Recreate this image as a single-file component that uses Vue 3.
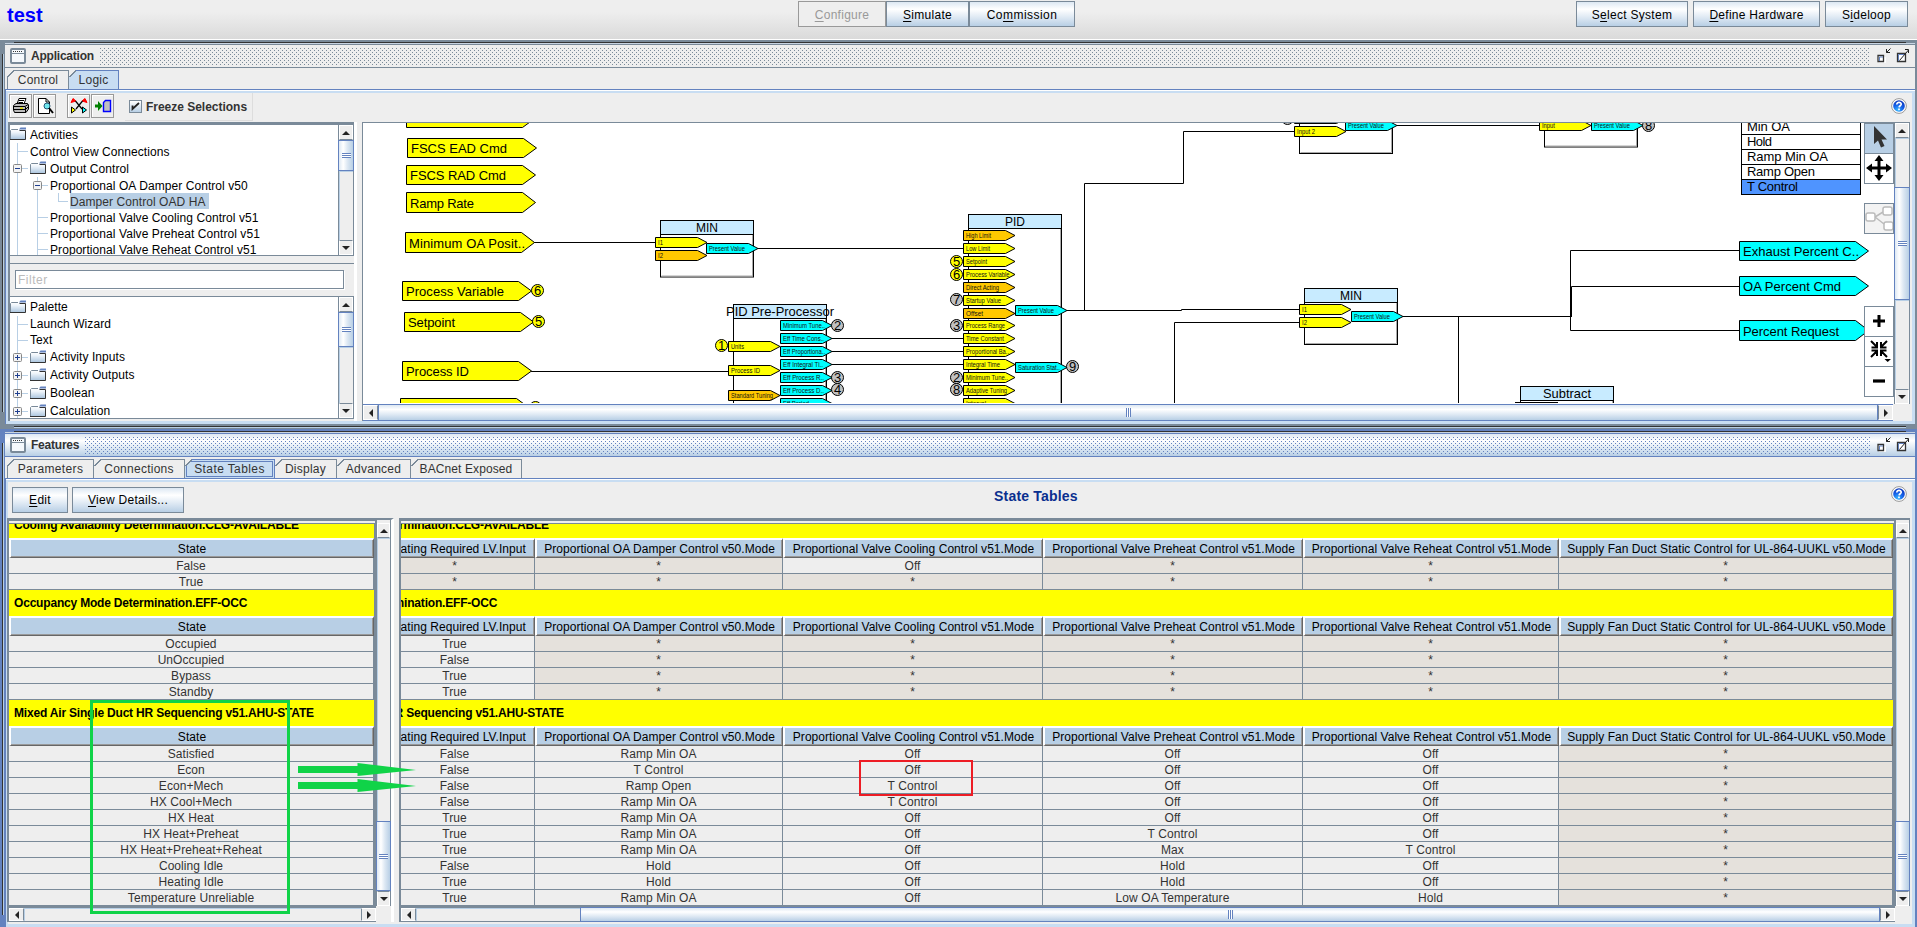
<script setup>
const activities = [
  { t: 'Activities', d: 0, folder: true },
  { t: 'Control View Connections', d: 1 },
  { t: 'Output Control', d: 1, folder: true, box: '-' },
  { t: 'Proportional OA Damper Control v50', d: 2, box: '-', rails: 1 },
  { t: 'Damper Control OAD HA', d: 3, sel: true, rails: 2, end: true },
  { t: 'Proportional Valve Cooling Control v51', d: 2, rails: 1 },
  { t: 'Proportional Valve Preheat Control v51', d: 2, rails: 1 },
  { t: 'Proportional Valve Reheat Control v51', d: 2, rails: 1 },
]
const palette = [
  { t: 'Palette', d: 0, folder: true },
  { t: 'Launch Wizard', d: 1 },
  { t: 'Text', d: 1 },
  { t: 'Activity Inputs', d: 1, folder: true, box: '+' },
  { t: 'Activity Outputs', d: 1, folder: true, box: '+' },
  { t: 'Boolean', d: 1, folder: true, box: '+' },
  { t: 'Calculation', d: 1, folder: true, box: '+' },
]
const trees = { activities, palette }

const Y = '#ffff00', C = '#00ffff', O = '#ffc800', G = '#c0c0c0'
// x, top, height, label, label width, fill
const tags = [
  [406.5, 108.5, 19, '', 0, Y],
  [407.5, 138.5, 19, 'FSCS EAD Cmd', 96, Y],
  [406.5, 165.5, 19, 'FSCS RAD Cmd', 96, Y],
  [406.5, 192.5, 20, 'Ramp Rate', 64, Y],
  [405.5, 232.5, 20, 'Minimum OA Posit..', 116, Y],
  [402.5, 281.5, 19, 'Process Variable', 98, Y],
  [404.5, 312.5, 19, 'Setpoint', 47, Y],
  [402.5, 361.5, 19, 'Process ID', 63, Y],
  [400.5, 398.5, 19, 'Process Units', 79, Y],
  [1739.5, 241.5, 19, 'Exhaust Percent C..', 116, C],
  [1739.5, 276.5, 19, 'OA Percent Cmd', 98, C],
  [1739.5, 320.5, 20, 'Percent Request', 96, C],
]
// x, top, bottom, title, title width
const blocks = [
  [660.5, 220.5, 277, 'MIN', 22],
  [733.5, 304.5, 420, 'PID Pre-Processor', 108],
  [968.5, 214.5, 420, 'PID', 20],
  [1299.5, 80.5, 153.5, '', 0],
  [1544.5, 80.5, 147, '', 0],
  [1304.5, 288.5, 344.5, 'MIN', 22],
  [1520.5, 386.5, 420, 'Subtract', 48],
]
// x, centre y, label, label width, fill
const ports = [
  [655.5, 242.5, 'I1', 5, Y], [655.5, 255.5, 'I2', 5, O], [706.5, 248.5, 'Present Value', 36, C],
  [728.5, 346.5, 'Units', 13, Y], [728.5, 370.5, 'Process ID', 29, Y], [728.5, 395.5, 'Standard Tuning', 42, O],
  [780.5, 325.5, 'Minimum Tune..', 42, C], [780.5, 338.5, 'Eff Time Cons..', 41, C],
  [780.5, 351.5, 'Eff Proportiona..', 42, C], [780.5, 364.5, 'Eff Integral Ti..', 40, C],
  [780.5, 377.5, 'Eff Process R..', 41, C], [780.5, 390.5, 'Eff Process D..', 41, C],
  [780.5, 403.5, 'Eff Period', 26, C],
  [963.5, 235.5, 'High Limit', 25, O], [963.5, 248.5, 'Low Limit', 24, Y],
  [963.5, 261.5, 'Setpoint', 21, Y], [963.5, 274.5, 'Process Variable', 43.5, Y],
  [963.5, 287.5, 'Direct Acting', 33, O], [963.5, 300.5, 'Startup Value', 35, Y],
  [963.5, 313.5, 'Offset', 17, O], [963.5, 325.5, 'Process Range', 39, Y],
  [963.5, 338.5, 'Time Constant', 38, Y], [963.5, 351.5, 'Proportional Ba..', 43, Y],
  [963.5, 364.5, 'Integral Time', 34, Y], [963.5, 377.5, 'Minimum Tune..', 42, Y],
  [963.5, 390.5, 'Adaptive Tuning', 41, Y], [963.5, 403.5, 'Interval', 20, Y],
  [1015.5, 310.5, 'Present Value', 36, C], [1015.5, 367.5, 'Saturation Stat..', 42, C],
  [1294.5, 118.5, '', 0, Y], [1294.5, 131.5, 'Input 2', 18, Y], [1345.5, 125.5, 'Present Value', 36, C],
  [1539.5, 125.5, 'Input', 13, Y], [1591.5, 125.5, 'Present Value', 36, C],
  [1299.5, 309.5, 'I1', 5, Y], [1299.5, 322.5, 'I2', 5, Y], [1351.5, 316.5, 'Present Value', 36, C],
]
const dots = [
  [537.5, 290.5, 6, Y], [538.5, 321.5, 5, Y], [721.5, 345.5, 1, Y], [535.5, 407.5, 1, Y],
  [837.5, 325.5, 2, G], [837.5, 377.5, 3, G], [837.5, 389.5, 4, G],
  [956.5, 261.5, 5, Y], [956.5, 274.5, 6, Y], [956.5, 299.5, 7, G], [956.5, 325.5, 3, G],
  [956.5, 377.5, 2, G], [956.5, 389.5, 8, G], [1072.5, 366.5, 9, G],
  [1287.5, 118.5, 7, G], [1648.5, 125.5, 8, G],
]
const wires = [
  'M534 242.5H655', 'M758 248.5H963', 'M531 371.5H728',
  'M832 338.5H963', 'M832 351.5H963', 'M832 364.5H963', 'M832 403.5H963',
  'M1067 310.5H1181.5V309.5H1299', 'M1084.5 310.5V183.5H1183.5V131.5H1294',
  'M1397 125.5H1539', 'M1299 322.5H1174.5V405', 'M1403 316.5H1570.5', 'M1458.5 316.5V405',
  'M1739 250.5H1570.5V330.5H1739', 'M1739 286.5H1571.5V317',
]
const states = [['Min OA', 119.5, 43], ['Hold', 134.5, 25], ['Ramp Min OA', 149.5, 81], ['Ramp Open', 164.5, 68], ['T Control', 179.5, 51]]

const heads = ['', 'Heating Required LV.Input', 'Proportional OA Damper Control v50.Mode', 'Proportional Valve Cooling Control v51.Mode', 'Proportional Valve Preheat Control v51.Mode', 'Proportional Valve Reheat Control v51.Mode', 'Supply Fan Duct Static Control for UL-864-UUKL v50.Mode']
const T = 'T Control', R = 'Ramp Min OA'
const sections = [
  { title: 'Cooling Availability Determination.CLG-AVAILABLE', rows: [
    ['False', '*', '*', 'Off', '*', '*', '*'],
    ['True', '*', '*', '*', '*', '*', '*'],
  ] },
  { title: 'Occupancy Mode Determination.EFF-OCC', rows: [
    ['Occupied', 'True', '*', '*', '*', '*', '*'],
    ['UnOccupied', 'False', '*', '*', '*', '*', '*'],
    ['Bypass', 'True', '*', '*', '*', '*', '*'],
    ['Standby', 'True', '*', '*', '*', '*', '*'],
  ] },
  { title: 'Mixed Air Single Duct HR Sequencing v51.AHU-STATE', rows: [
    ['Satisfied', 'False', R, 'Off', 'Off', 'Off', '*'],
    ['Econ', 'False', T, 'Off', 'Off', 'Off', '*'],
    ['Econ+Mech', 'False', 'Ramp Open', T, 'Off', 'Off', '*'],
    ['HX Cool+Mech', 'False', R, T, 'Off', 'Off', '*'],
    ['HX Heat', 'True', R, 'Off', 'Off', 'Off', '*'],
    ['HX Heat+Preheat', 'True', R, 'Off', T, 'Off', '*'],
    ['HX Heat+Preheat+Reheat', 'True', R, 'Off', 'Max', T, '*'],
    ['Cooling Idle', 'False', 'Hold', 'Off', 'Hold', 'Off', '*'],
    ['Heating Idle', 'True', 'Hold', 'Off', 'Hold', 'Off', '*'],
    ['Temperature Unreliable', 'True', R, 'Off', 'Low OA Temperature', 'Hold', '*'],
  ] },
]
const featureTabs = ['Parameters', 'Connections', 'State Tables', 'Display', 'Advanced', 'BACnet Exposed']
</script>

<template>
  <div class="root">
    <svg class="defs" width="0" height="0">
      <defs>
        <linearGradient id="fold" x1="0" y1="0" x2="0" y2="1"><stop offset="0" stop-color="#fff" /><stop offset=".3" stop-color="#eef4fa" /><stop offset="1" stop-color="#a9c4de" /></linearGradient>
        <radialGradient id="ball" cx=".4" cy=".85" r=".9"><stop offset="0" stop-color="#36b8ff" /><stop offset=".5" stop-color="#1560e8" /><stop offset="1" stop-color="#0a2fb4" /></radialGradient>
        <symbol id="folder" viewBox="0 0 16 14">
          <path d="M.5 12.500V3.500L1.500 2.500H8.500L10.500 3.500H15.500V12.500Z" fill="url(#fold)" />
          <path d="M.5 12.500V3.500L1.500 2.500H8" fill="none" stroke="#7a8a99" />
          <path d="M0 12.500H15.500V3.500H9.500" fill="none" stroke="#333" />
          <path d="M9 2.500L10.500 .5H16V2.500Z" fill="#6382bf" />
        </symbol>
        <symbol id="win" viewBox="0 0 16 16">
          <rect x="1" y="1" width="14" height="14" rx="1" fill="#f4f8fc" stroke="#7a8a99" stroke-width="2" />
          <path d="M2 5.5H14" stroke="#7a8a99" />
          <path d="M3 3.5H13" stroke="#333" stroke-dasharray="1 1" />
        </symbol>
        <symbol id="restore" viewBox="0 0 14 16">
          <path d="M2.5 9.5H8.500V14.500H2.500Z" fill="#fff" stroke="#fff" />
          <path d="M1 7.500H6.500V13.500H1Z" fill="#fff" stroke="#333" stroke-width="1.300" />
          <path d="M2.500 13V9H6" fill="none" stroke="#6382bf" />
          <path d="M13.500 .5L9.500 4.500M9.500 1V4.500H13" fill="none" stroke="#222" />
        </symbol>
        <symbol id="maxi" viewBox="0 0 14 16">
          <path d="M1.500 5.500H9.500V13.500H1.500Z" fill="#fff" stroke="#333" stroke-width="1.300" />
          <path d="M2.500 13V6.500H9" fill="none" stroke="#6382bf" />
          <path d="M3.500 12.500L12.500 2M9 1.500H12.500V5" fill="none" stroke="#222" />
        </symbol>
        <symbol id="help" viewBox="0 0 16 16">
          <circle cx="8" cy="8" r="7.4" fill="#fff" stroke="#999" />
          <circle cx="8" cy="8" r="5.8" fill="url(#ball)" />
          <path d="M5.8 6.4C5.8 3.6 10.3 3.8 10.2 6.3C10.1 7.8 8.2 7.8 8.1 9.4M8 10.6V12.2" fill="none" stroke="#fff" stroke-width="1.7" />
        </symbol>
      </defs>
    </svg>

    <header class="top">
      <h1>test</h1>
      <nav class="modes">
        <span class="btn off"><u>C</u>onfigure</span><span class="btn"><u>S</u>imulate</span><span class="btn">Co<u>m</u>mission</span>
      </nav>
      <nav class="right">
        <span class="btn">S<u>e</u>lect System</span><span class="btn"><u>D</u>efine Hardware</span><span class="btn">S<u>i</u>deloop</span>
      </nav>
    </header>

    <section class="frame app">
      <div class="edge"></div>
      <div class="title"><svg width="16" height="16"><use href="#win" /></svg><b>Application</b><span class="bumps"></span><svg class="w1" width="14" height="16"><use href="#restore" /></svg><svg class="w2" width="14" height="16"><use href="#maxi" /></svg></div>
      <div class="tabs"><span class="tab c1">Control</span><span class="tab c2 on">Logic</span></div>
      <div class="pane">
        <div class="tools">
          <span class="tb"><svg width="18" height="18" viewBox="0 0 18 18"><path d="M5 7L7 1.5H14L12 7M7 3.5H12M6.5 5.5H11" fill="#fff" stroke="#000" /><path d="M1.5 8.5L4 6.5H15.5L16.5 8V12L14 15.5H2.5L1.5 13Z" fill="#bbb" stroke="#000" /><path d="M2 9.5H13L16 7.5M2 12.5H13.5L16 10M13.5 10V15" fill="none" stroke="#000" /><path d="M8 11.2H11" stroke="#dd0" stroke-width="1.5" /></svg></span>
          <span class="tb"><svg width="18" height="18" viewBox="0 0 18 18"><path d="M2.5 1.5H10L13.5 5V16.5H2.5Z" fill="#fff" stroke="#000" /><path d="M10 1.5V5H13" fill="none" stroke="#000" /><circle cx="11" cy="9" r="3" fill="#6fe8ee" stroke="#257" /><path d="M13 11L17 16" stroke="#000" stroke-width="2" /></svg></span>
          <span class="tb gap"><svg width="18" height="18" viewBox="0 0 18 18"><path d="M1 5.500L3 1.500L6 4ZM17 5.500L15 1.500L12 4Z" fill="#f00" stroke="#f00" /><path d="M5.500 4L12 12M12.500 4L6 12" fill="none" stroke="#000" stroke-width="1.200" /><path d="M1.5 10V16L5.5 13Z" fill="#ff0" stroke="#000" /><path d="M12.5 10V16L16.5 13Z" fill="#0ff" stroke="#000" /></svg></span>
          <span class="tb"><svg width="18" height="18" viewBox="0 0 18 18"><path d="M1 7.5H4V4L8.5 9L4 14V10.5H1Z" fill="#008000" /><path d="M9.5 5.5L11.5 3.5H16.5V14.5H9.5Z" fill="#c0c0c0" stroke="#00f" stroke-width="1.4" /></svg></span>
          <label class="freeze"><span class="chk"><svg width="9" height="9" viewBox="0 0 9 9"><path d="M1.5 3.5V7L8 1" fill="none" stroke="#222" stroke-width="1.8" /></svg></span><b>Freeze Selections</b></label>
          <svg class="help" width="16" height="16"><use href="#help" /></svg>
        </div>
        <div class="split">
          <aside>
            <template v-for="(rows, key) in trees" :key="key">
              <div v-if="key === 'palette'" class="filter"><div>Filter</div></div>
              <div class="treebox" :class="key">
                <ul class="tree">
                  <li v-for="r in rows" :key="r.t" :class="['d' + r.d, { fold: r.folder, end: r.end, kid: r.rails >= 1 }]">
                    <svg v-if="r.box" class="box" width="9" height="9" viewBox="0 0 9 9"><rect x=".5" y=".5" width="8" height="8" rx="1" fill="#f4f4f4" stroke="#888" /><path :d="r.box === '+' ? 'M2 4.5H7M4.5 2V7' : 'M2 4.5H7'" stroke="#1f3f8f" /></svg>
                    <svg v-if="r.folder" class="fi" width="16" height="14"><use href="#folder" /></svg>
                    <span :class="{ sel: r.sel }">{{ r.t }}</span>
                  </li>
                </ul>
                <div class="vbar"><i class="sb up"></i><i class="th"><em></em></i><i class="sp"></i><i class="sb dn"></i></div>
              </div>
            </template>
          </aside>
          <div class="canvas">
            <div class="crow">
              <div class="stage">
                <svg width="1531" height="280" viewBox="363 123 1531 280">
                  <g v-for="(b, i) in blocks" :key="'b' + i">
                    <rect :x="b[0]" :y="b[1]" width="93" :height="b[2] - b[1]" class="blk" />
                    <path :d="`M${b[0] + 92} ${b[1] + 1}V${b[2] - 1}H${b[0] + 1}`" class="shade" />
                  </g>
                  <g v-for="(b, i) in blocks" :key="'h' + i">
                    <rect v-if="b[3]" :x="b[0]" :y="b[1]" width="93" height="14" class="bh" />
                    <text v-if="b[3]" :x="b[0] + 46.5 - b[4] / 2" :y="b[1] + 11.5" :textLength="b[4]" lengthAdjust="spacingAndGlyphs" class="big">{{ b[3] }}</text>
                  </g>
                  <path v-for="w in wires" :key="w" :d="w" class="wire" />
                  <path d="M1515 403H1558" stroke="#000" stroke-width="2" />
                  <g v-for="(p, i) in ports" :key="'p' + i">
                    <path :d="`M${p[0]} ${p[1] - 5}h42l9.5 5l-9.5 5h-42z`" :fill="p[4]" class="ol" />
                    <text v-if="p[2]" :x="p[0] + 2.5" :y="p[1] + 2" :textLength="p[3]" lengthAdjust="spacingAndGlyphs" class="tiny">{{ p[2] }}</text>
                  </g>
                  <g v-for="(t, i) in tags" :key="'t' + i">
                    <path :d="`M${t[0]} ${t[1]}h116l13 ${t[2] / 2}l-13 ${t[2] / 2}h-116z`" :fill="t[5]" class="ol" />
                    <text v-if="t[3]" :x="t[0] + 3.5" :y="t[1] + (t[2] === 20 ? 15.5 : 14.5)" :textLength="t[4]" class="big">{{ t[3] }}</text>
                  </g>
                  <g v-for="(d, i) in dots" :key="'d' + i">
                    <circle :cx="d[0]" :cy="d[1]" r="6" :fill="d[3]" class="ol" />
                    <text :x="d[0]" :y="d[1] + 4.8" text-anchor="middle" class="big">{{ d[2] }}</text>
                  </g>
                  <g v-for="s in states" :key="s[0]">
                    <rect x="1741.5" :y="s[1]" width="119" height="15" :fill="s[0] === 'T Control' ? '#4f94ff' : '#fff'" class="ol" />
                    <text x="1747" :y="s[1] + 11.5" :textLength="s[2]" class="big">{{ s[0] }}</text>
                  </g>
                </svg>
                <div class="fl f1 hot"><svg width="28" height="28" viewBox="0 0 28 28"><path d="M9 2V20L13 16.5L16 23.5L19.5 22L16.5 15.5H22Z" fill="#333" /></svg></div>
                <div class="fl f2"><svg width="28" height="28" viewBox="0 0 28 28"><path d="M14 1L18.5 7H15.5V12.5H21V9.5L27 14L21 18.5V15.5H15.5V21H18.5L14 27L9.500 21H12.500V15.500H7V18.500L1 14L7 9.500V12.500H12.500V7H9.500Z" fill="#000" /></svg></div>
                <div class="fl f3 dim"><svg width="28" height="28" viewBox="0 0 28 28"><g fill="#fff" stroke="#bbb" stroke-width="1.5"><path d="M10 13L18 8M10 13L19 20" /><rect x="1" y="9" width="9" height="8" rx="2" /><rect x="18" y="3" width="9" height="8" rx="2" /><rect x="19" y="18" width="9" height="8" rx="2" /></g></svg></div>
                <div class="fl f4"><svg width="28" height="28" viewBox="0 0 28 28"><path d="M8 14H20M14 8V20" stroke="#000" stroke-width="3" /></svg></div>
                <div class="fl f5"><svg width="28" height="28" viewBox="0 0 28 28"><path d="M6 4L12 10M12 5V10.500H6.500M22 4L16 10M16 5V10.500H21.500M6 20L12 14M12 19V13.500H6.500M22 20L16 14M16 19V13.500H21.500" fill="none" stroke="#000" stroke-width="2" /><path d="M19.500 22H26L22.700 25Z" /></svg></div>
                <div class="fl f6"><svg width="28" height="28" viewBox="0 0 28 28"><path d="M8 14H20" stroke="#000" stroke-width="3.200" /></svg></div>
              </div>
              <div class="hbar"><i class="sb lf"></i><i class="th"><em></em></i><i class="sb rt"></i></div>
            </div>
            <div class="vbar cv"><i class="sb up"></i><i class="sp a"></i><i class="th"><em></em></i><i class="sp"></i><i class="sb dn"></i><span class="corner"></span></div>
          </div>
        </div>
      </div>
    </section>

    <section class="frame feat">
      <div class="edge"></div>
      <div class="title"><svg width="16" height="16"><use href="#win" /></svg><b>Features</b><span class="bumps"></span><svg class="w1" width="14" height="16"><use href="#restore" /></svg><svg class="w2" width="14" height="16"><use href="#maxi" /></svg></div>
      <div class="tabs"><span v-for="(t, i) in featureTabs" :key="t" class="tab" :class="['t' + i, { on: i === 2 }]">{{ t }}</span></div>
      <div class="pane">
        <div class="bar">
          <span class="btn edit"><u>E</u>dit</span><span class="btn details"><u>V</u>iew Details...</span>
          <h2>State Tables</h2>
          <svg class="help" width="16" height="16"><use href="#help" /></svg>
        </div>
        <div class="tables">
          <div class="tp left">
            <div class="tcol">
              <div class="port"><div class="inner">
                <div v-for="s in sections" :key="s.title">
                  <div class="yt">{{ s.title }}</div>
                  <div class="hd"><span>State</span></div>
                  <div v-for="r in s.rows" :key="r[0]" class="rw"><span>{{ r[0] }}</span></div>
                </div>
              </div></div>
              <div class="hbar"><i class="sb lf"></i><i class="sp"></i><i class="sb rt"></i></div>
            </div>
            <div class="vbar tv"><i class="sb up"></i><i class="sp"></i><i class="th"><em></em></i><i class="sb dn"></i><span class="corner"></span></div>
          </div>
          <div class="tp wide">
            <div class="tcol">
              <div class="port"><div class="inner">
                <div v-for="s in sections" :key="s.title">
                  <div class="yt">{{ s.title }}</div>
                  <div class="hd"><span v-for="(h, i) in heads" :key="i">{{ h }}</span></div>
                  <div v-for="r in s.rows" :key="r[0]" class="rw"><span></span><span v-for="(c, i) in r.slice(1)" :key="i" :class="{ star: c === '*' }">{{ c }}</span></div>
                </div>
              </div></div>
              <div class="hbar"><i class="sb lf"></i><i class="sp lead"></i><i class="th"><em></em></i><i class="sb rt"></i></div>
            </div>
            <div class="vbar tv"><i class="sb up"></i><i class="sp"></i><i class="th"><em></em></i><i class="sb dn"></i><span class="corner"></span></div>
          </div>
        </div>
      </div>
    </section>

    <svg class="notes" width="1917" height="927" viewBox="0 0 1917 927">
      <rect x="91.500" y="701.500" width="197" height="211" fill="none" stroke="#10d348" stroke-width="3" />
      <path d="M298 766H357.500V763L416 770L357.500 776V773H298Z" fill="#10d348" />
      <path d="M298 782H357.500V779L416 786L357.500 792V789H298Z" fill="#10d348" />
      <rect x="860" y="761" width="112" height="34" fill="none" stroke="#ed1c24" stroke-width="2" />
    </svg>
  </div>
</template>

<style>
html, body { margin: 0; overflow: hidden; background: #eee; }
</style>

<style scoped>
* { box-sizing: border-box; }
.root { position: relative; width: 1917px; height: 927px; display: flex; flex-direction: column; overflow: hidden; background: #eee; font: 12px/16px "Liberation Sans", Arial, sans-serif; letter-spacing: .07px; color: #333; white-space: nowrap; }
.defs, .notes { position: absolute; left: 0; top: 0; pointer-events: none; }
svg { display: block; flex: none; }
i { font-style: normal; display: block; }
.top { height: 40px; flex: none; display: flex; align-items: flex-start; background: linear-gradient(#eee, #eee 30%, #dadada 97%, #fff 98%); }
h1 { margin: 0; padding: 3px 0 0 7px; width: 798px; font: bold 20px/24px "Liberation Sans", sans-serif; letter-spacing: 0; color: #00f; }
.modes, .right { display: flex; margin-top: 1px; }
.right { margin-left: auto; gap: 5px; padding-right: 9px; }
.btn { height: 26px; border: 1px solid #7a8a99; background: linear-gradient(#dde8f3, #fff 30%, #dde8f3 65%, #b8cfe5); text-align: center; line-height: 26px; color: #000; letter-spacing: .28px; }
.btn u { text-underline-offset: 2px; }
.btn.off { background: #eee; border-color: #999; color: #999; }
.modes .btn:nth-child(1) { width: 88px; }
.modes .btn:nth-child(2) { width: 83px; }
.modes .btn:nth-child(3) { width: 106px; letter-spacing: .45px; }
.right .btn:nth-child(1) { width: 112px; }
.right .btn:nth-child(2) { width: 127px; }
.right .btn:nth-child(3) { width: 83px; }

.frame { --fc: #7a8a99; position: relative; border-left: 5px solid var(--fc); border-right: 2px solid var(--fc); background: #eee; display: flex; flex-direction: column; flex: none; }
.frame::before { content: ""; position: absolute; left: -3px; top: 14px; bottom: 12px; width: 1px; background: #333; box-shadow: 1px 0 #b8cfe5; }
.app { height: 389px; border-bottom: 5px solid #7a8a99; }
.app::after { content: ""; position: absolute; left: 9px; right: 9px; bottom: -3px; height: 1px; background: #333; box-shadow: 0 1px #b8cfe5; }
.feat { --fc: #6382bf; height: 498px; }
.edge { height: 5px; flex: none; border-bottom: 1px solid var(--fc); background: linear-gradient(#333, #333) 9px 2px / calc(100% - 18px) 1px no-repeat, linear-gradient(#c8d4e2, #c8d4e2) 0 3px / 100% 1px no-repeat, var(--fc); }
.title { height: 23px; flex: none; display: flex; align-items: center; padding: 0 5px; border-bottom: 1px solid var(--fc); }
.title b { margin-left: 5px; letter-spacing: -.22px; }
.bumps { flex: 1; height: 17px; margin: 0 7px 0 6px; background: conic-gradient(from 0deg at 1px 1px, transparent 270deg, var(--fc) 0) 0 0 / 4px 4px, conic-gradient(from 0deg at 1px 1px, transparent 270deg, var(--fc) 0) 2px 2px / 4px 4px; }
.feat .title { background: linear-gradient(#dde8f3, #fff 30%, #dde8f3 65%, #b8cfe5); }
.w2 { margin-left: 5px; }
.tabs { height: 21px; flex: none; display: flex; align-items: flex-end; padding-left: 2px; }
.tab { position: relative; height: 19px; border: 1px solid #7a8a99; border-left: 0; border-bottom: 0; text-align: center; line-height: 18px; letter-spacing: .25px; }
.tab::before { content: ""; position: absolute; left: 0; top: -1px; width: 7px; height: 7px; background: linear-gradient(135deg, #eee 45%, #7a8a99 45% 58%, transparent 58%); }
.tab:first-child { border-left: 1px solid #7a8a99; }
.tab:first-child::before { left: -1px; }
.tab.on { background: #c8ddf2; border-color: #6382bf; }
.c1 { width: 62px; } .c2 { width: 50px; }
.t0 { width: 87px; letter-spacing: .35px; } .t1 { width: 91px; } .t2 { width: 90px; letter-spacing: .4px; box-shadow: inset 0 0 0 1px #c8ddf2, inset 0 0 0 2px #6382bf; } .t3 { width: 62px; } .t4 { width: 74px; } .t5 { width: 111px; letter-spacing: .1px; }
.pane { flex: 1; min-height: 0; display: flex; flex-direction: column; border-top: 1px solid #6382bf; border-left: 1px solid #6382bf; box-shadow: inset 0 1px #fff, inset 0 3px #c8ddf2, inset 2px 0 #c8ddf2, inset -3px 0 #c8ddf2, inset 0 -3px #c8ddf2; }

.tools { display: flex; height: 32px; padding: 3px 0 0 3px; flex: none; position: relative; }
.tb { width: 23px; height: 24px; margin-right: 1px; border: 1px solid #999; box-shadow: inset 1px 1px #fff; padding: 2px; margin-top: 1px; }
.tb.gap { margin-left: 10px; }
.freeze { width: 128px; height: 28px; margin: 0 0 0 10px; display: flex; align-items: center; padding-left: 4px; border-right: 1px solid #ddd; border-bottom: 1px solid #ddd; }
.chk { width: 13px; height: 13px; border: 1px solid #7a8a99; background: linear-gradient(#fff, #b8cfe5); padding: 1px; }
.freeze b { margin-left: 4px; letter-spacing: -.02px; }
.help { margin-left: auto; margin-right: 8px; margin-top: 5px; }
.split { display: flex; padding-left: 2px; height: 299px; flex: none; }
aside { width: 349px; display: flex; flex-direction: column; flex: none; border-left: 2px solid #7a8a99; border-right: 3px solid #fff; }
.treebox { display: flex; background: #fff; flex: none; padding: 0; }
.treebox.activities { height: 134px; border-top: 3px solid #7a8a99; border-bottom: 1px solid #7a8a99; }
.treebox.palette { height: 123px; border-top: 1px solid #7a8a99; border-bottom: 1px solid #7a8a99; }
.tree { list-style: none; margin: 0; padding: 0; flex: 1; overflow: hidden; color: #000; }
.tree li { height: 16px; display: flex; align-items: center; position: relative; padding-left: 20px; }
.tree li.fold { height: 18px; }
.activities li span { line-height: 14px; padding-top: 2px; }
.tree li.d0 { padding-left: 0; } .tree li.d2 { padding-left: 40px; } .tree li.d3 { padding-left: 60px; }
.fi { margin-right: 4px; }
.tree li:not(.d0)::before { content: ""; position: absolute; left: 7px; top: 0; bottom: 0; width: 10px; border-left: 1px solid #b8cfe5; background: linear-gradient(#b8cfe5, #b8cfe5) 0 50% / 100% 1px no-repeat; }
.tree li.kid::before { background: none; }
.tree li.kid::after { content: ""; position: absolute; left: 27px; top: 0; bottom: 0; width: 10px; border-left: 1px solid #b8cfe5; background: linear-gradient(#b8cfe5, #b8cfe5) 0 50% / 100% 1px no-repeat; }
.tree li.end::after { background: linear-gradient(#b8cfe5, #b8cfe5) 20px 0 / 1px 8px no-repeat, linear-gradient(#b8cfe5, #b8cfe5) 20px 8px / 10px 1px no-repeat; width: 32px; }
.box { position: absolute; left: 3px; z-index: 1; }
.d2 .box { left: 23px; }
.sel { background: #b8cfe5; color: #333; padding-right: 3px; }
.filter { height: 40px; flex: none; padding: 14px 10px 0 5px; background: linear-gradient(#7a8a99, #7a8a99) 0 7px / 100% 1px no-repeat, #eee; }
.palette .tree { padding-top: 0; }
.palette .tree li:first-child { margin-top: 1px; }
.filter div { height: 19px; width: 329px; border: 1px solid #7a8a99; box-shadow: 1px 1px #fff; background: #fff; color: #bbb; line-height: 18px; padding-left: 2px; letter-spacing: .5px; }

.vbar { width: 16px; flex: none; display: flex; flex-direction: column; border-left: 1px solid #7a8a99; border-right: 1px solid #7a8a99; background: #eee; }
.hbar { height: 15px; flex: none; display: flex; border-top: 1px solid #7a8a99; border-bottom: 1px solid #7a8a99; background: #eee; }
.sb { position: relative; flex: none; background: #eee; border: 1px solid #fff; }
.vbar .sb { height: 15px; } .hbar .sb { width: 15px; }
.sb::after { content: ""; position: absolute; left: 50%; top: 50%; border: 4px solid transparent; }
.up { border-bottom: 1px solid #7a8a99; } .dn { border-top: 1px solid #7a8a99; }
.lf { border-right: 1px solid #7a8a99; } .rt { border-left: 1px solid #7a8a99; }
.up::after { border-bottom-color: #222; border-top: 0; margin: -2px 0 0 -4px; }
.dn::after { border-top-color: #222; margin: -2px 0 0 -4px; border-bottom: 0; }
.lf::after { border-right-color: #222; margin: -4px 0 0 -2px; border-left: 0; }
.rt::after { border-left-color: #222; margin: -4px 0 0 -2px; border-right: 0; }
.sp { flex: 1; box-shadow: inset 1px 1px #b8cfe5; }
.th { flex: none; display: flex; align-items: center; justify-content: center; border: 1px solid #6382bf; }
.vbar .th { height: 31px; margin: 0 -1px; background: linear-gradient(90deg, #dde8f3, #fff 30%, #dde8f3 60%, #b8cfe5); }
.hbar .th { margin: -1px 0; background: linear-gradient(#dde8f3, #fff 30%, #dde8f3 65%, #b8cfe5); flex: 1; }
.palette .vbar .th { height: 35px; }
.vbar em { width: 9px; height: 5px; background: repeating-linear-gradient(#6382bf 0 1px, #fff 1px 2px); }
.hbar em { height: 9px; width: 5px; background: repeating-linear-gradient(90deg, #6382bf 0 1px, #fff 1px 2px); }

.canvas { margin-left: 5px; border-left: 1px solid #7a8a99; border-top: 1px solid #7a8a99; width: 1548px; display: flex; height: 299px; }
.crow { width: 1531px; flex: none; }
.stage { position: relative; height: 281px; background: #fff; overflow: hidden; }
.crow .hbar { width: 1530px; height: 17px; border-color: #6382bf; }
.blk { fill: #fff; stroke: #000; } .shade { fill: none; stroke: #aaa; }
.bh { fill: #c8ebff; stroke: #000; } .wire { fill: none; stroke: #000; } .ol { stroke: #000; }
.big { font-size: 13px; fill: #000; letter-spacing: 0; } .tiny { font-size: 6.600px; fill: #111; letter-spacing: 0; }
.fl { position: absolute; left: 1501px; width: 30px; height: 31px; border: 1px solid #7a8a99; background: #fff; }
.hot { background: #b8cfe5; } .dim { background: #f3f3f3; }
.f1 { top: 0; } .f2 { top: 30px; } .f3 { top: 80px; } .f4 { top: 183px; } .f5 { top: 213px; } .f6 { top: 243px; }
.vbar.cv { height: 297px; }
.cv .a { flex: none; height: 49px; } .cv .th { height: 113px; }
.corner { height: 16px; flex: none; margin: 0 -1px; background: #eee; }

.bar { display: flex; height: 39px; flex: none; padding: 8px 0 0 6px; position: relative; }
.edit { width: 56px; margin-right: 4px; } .details { width: 112px; }
.bar .btn { line-height: 25px; }
h2 { margin: 0; position: absolute; left: 988px; top: 8px; font: bold 14px/18px "Liberation Sans", sans-serif; letter-spacing: .2px; color: #0a2f8f; }
.bar .help { margin-top: -1px; }
.tables { display: flex; padding-left: 1px; height: 405px; flex: none; }
.tp { display: flex; border-top: 2px solid #7a8a99; border-left: 2px solid #7a8a99; flex: none; height: 404px; }
.tp.left { width: 387px; border-right: 3px solid #fff; margin-right: 5px; }
.tp.wide { width: 1511px; }
.tcol { flex: 1; min-width: 0; }
.port { height: 387px; border-top: 4px double #7a8a99; border-right: 2px solid #7a8a99; border-bottom: 1px solid #7a8a99; overflow: hidden; }
.inner { margin-top: -12px; }
.wide .inner { margin-left: -142px; width: 1634px; }
.yt { height: 26px; line-height: 26px; background: #ff0; font-weight: bold; color: #000; padding-left: 5px; letter-spacing: -.19px; }
.hd, .rw { display: grid; grid-template-columns: 1fr; text-align: center; }
.wide .hd, .wide .rw { grid-template-columns: 116px 160px 248px 260px 260px 256px 334px; }
.hd span { height: 20px; line-height: 18px; color: #000; background: #b8cfe5; border-top: 2px solid #fff; border-left: 2px solid #fff; border-right: 1px solid #666; border-bottom: 1px solid #666; box-shadow: inset -1px -1px #999; }
.wide .hd span { letter-spacing: .05px; }
.rw span { height: 16px; line-height: 16px; border-right: 1px solid #7a8a99; border-bottom: 1px solid #7a8a99; background: #eee; }
.rw .star { background: #e5e1dc; }
.tv .th { height: 70px; }
.vbar.tv { padding-top: 3px; width: 15px; }
.wide .lead { flex: none; width: 164px; }
</style>
